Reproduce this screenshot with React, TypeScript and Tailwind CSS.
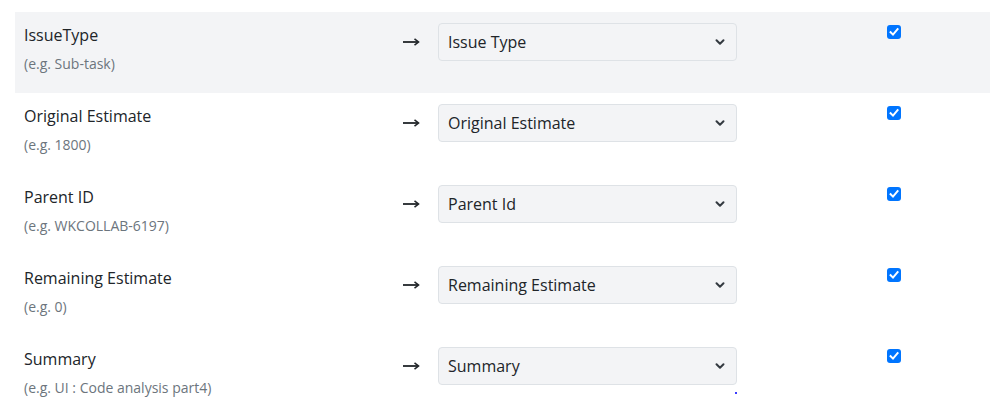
import React from "react";

const rows = [
  { name: "IssueType", ex: "(e.g. Sub-task)", val: "Issue Type", hl: true },
  { name: "Original Estimate", ex: "(e.g. 1800)", val: "Original Estimate" },
  { name: "Parent ID", ex: "(e.g. WKCOLLAB-6197)", val: "Parent Id" },
  { name: "Remaining Estimate", ex: "(e.g. 0)", val: "Remaining Estimate" },
  { name: "Summary", ex: "(e.g. UI : Code analysis part4)", val: "Summary" },
];

function Chevron() {
  return (
    <svg width="10" height="8" viewBox="0 0 10 8" className="text-[#343a40]">
      <path d="M1.5 2.2 L5 5.7 L8.5 2.2" fill="none" stroke="currentColor" strokeWidth="2" strokeLinecap="round" strokeLinejoin="round" />
    </svg>
  );
}

function Arrow() {
  return (
    <svg width="17" height="10" viewBox="0 0 17 10" className="text-[#212529]">
      <path d="M0 5 H15" stroke="currentColor" strokeWidth="1.8" />
      <path d="M11.5 1.8 L15.5 5 L11.5 8.2" fill="none" stroke="currentColor" strokeWidth="1.6" strokeLinejoin="miter" />
    </svg>
  );
}

function Check() {
  return (
    <div className="w-[14px] h-[14px] rounded-[3px] bg-[#0075ff] flex items-center justify-center">
      <svg width="10" height="10" viewBox="0 0 10 10">
        <path d="M1.6 5.2 L4 7.6 L8.6 2.2" fill="none" stroke="white" strokeWidth="2" strokeLinecap="square" />
      </svg>
    </div>
  );
}

export default function App() {
  return (
    <div className="w-[999px] h-[417px] bg-white relative overflow-hidden" style={{ fontFamily: '"Open Sans", "Noto Sans", sans-serif' }}>
      <div className="pt-[12px] pl-[15px] w-[990px]">
        {rows.map((r) => (
          <div
            key={r.name}
            className={`grid grid-cols-[379px_35px_299px_1fr] h-[81px] pl-[9px] ${r.hl ? "bg-[#f3f4f6]" : ""}`}
          >
            <div className="pt-[11px]">
              <div className="text-[16px] leading-[24px] text-[#212529]">{r.name}</div>
              <div className="text-[14px] leading-[20px] text-[#6c757d] mt-[7px]">{r.ex}</div>
            </div>
            <div className="pt-[25px]">
              <Arrow />
            </div>
            <div className="pt-[11px]">
              <div className="h-[38px] rounded-[4px] border border-[#dee2e6] bg-[#f3f4f6] flex items-center justify-between pl-[9px] pr-[11px]">
                <span className="text-[16px] text-[#212529]">{r.val}</span>
                <Chevron />
              </div>
            </div>
            <div className="pt-[13px] pl-[150px]">
              <Check />
            </div>
          </div>
        ))}
      </div>
      <div className="absolute left-[735px] top-[392px] w-[2px] h-[2px] bg-[#3b3bff]" />
    </div>
  );
}
